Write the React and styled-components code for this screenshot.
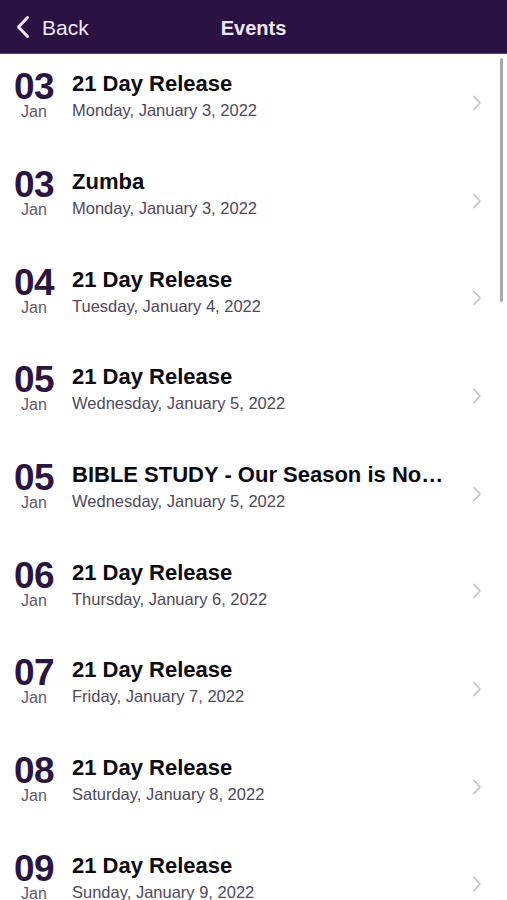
import React from "react";
import styled, { createGlobalStyle } from "styled-components";

const events = [
  { day: "03", title: "21 Day Release", date: "Monday, January 3, 2022" },
  { day: "03", title: "Zumba", date: "Monday, January 3, 2022" },
  { day: "04", title: "21 Day Release", date: "Tuesday, January 4, 2022" },
  { day: "05", title: "21 Day Release", date: "Wednesday, January 5, 2022" },
  { day: "05", title: "BIBLE STUDY - Our Season is Now - Week 1", date: "Wednesday, January 5, 2022" },
  { day: "06", title: "21 Day Release", date: "Thursday, January 6, 2022" },
  { day: "07", title: "21 Day Release", date: "Friday, January 7, 2022" },
  { day: "08", title: "21 Day Release", date: "Saturday, January 8, 2022" },
  { day: "09", title: "21 Day Release", date: "Sunday, January 9, 2022" },
];

const App = () => {
  return (
    <>
      <GlobalStyle />
      <Screen>
        <Header>
          <BackButton>
            <svg width="14" height="24" viewBox="0 0 14 24">
              <polyline
                points="11.5,2.5 2.5,12 11.5,21.5"
                fill="none"
                stroke="currentColor"
                strokeWidth="3"
                strokeLinecap="round"
                strokeLinejoin="round"
              />
            </svg>
            Back
          </BackButton>
          <Title>Events</Title>
        </Header>
        <List>
          {events.map((ev, i) => (
            <Row key={i}>
              <Main>
                <DateCol>
                  <Day>{ev.day}</Day>
                  <Month>Jan</Month>
                </DateCol>
                <Details>
                  <EventTitle>{ev.title}</EventTitle>
                  <EventDate>{ev.date}</EventDate>
                </Details>
              </Main>
              <Chevron width="10" height="16" viewBox="0 0 10 16">
                <polyline
                  points="2,1.5 8,8 2,14.5"
                  fill="none"
                  stroke="#c3c2c7"
                  strokeWidth="1.8"
                  strokeLinecap="round"
                  strokeLinejoin="round"
                />
              </Chevron>
            </Row>
          ))}
          <ScrollThumb />
        </List>
      </Screen>
    </>
  );
};

export default App;

const GlobalStyle = createGlobalStyle`
  html, body {
    margin: 0;
    padding: 0;
    background: #ffffff;
  }
  body {
    font-family: "Liberation Sans", Arial, sans-serif;
  }
`;

const Screen = styled.div`
  width: 507px;
  height: 900px;
  overflow: hidden;
  background: #ffffff;
`;

const Header = styled.header`
  position: relative;
  height: 54px;
  padding-top: 3px;
  background: #2a1243;
  border-bottom: 1px solid #5b4a6e;
  box-sizing: border-box;
  display: flex;
  align-items: center;
  justify-content: center;
`;

const BackButton = styled.div`
  position: absolute;
  left: 16px;
  top: 3px;
  bottom: 0;
  display: flex;
  align-items: center;
  gap: 12px;
  color: #efe8f4;
  font-size: 21px;
  & svg {
    margin-top: -2px;
  }
`;

const Title = styled.h1`
  margin: 0;
  color: #efe8f4;
  font-size: 20px;
  font-weight: 700;
`;

const List = styled.div`
  position: relative;
`;

const Row = styled.div`
  height: 97.7px;
  display: flex;
  align-items: center;
  padding: 0 25px 0 9px;
  box-sizing: border-box;
`;

const Main = styled.div`
  flex: 1;
  min-width: 0;
  display: flex;
  align-items: flex-start;
  gap: 13px;
  padding-bottom: 13px;
`;

const DateCol = styled.div`
  width: 50px;
  flex-shrink: 0;
  margin-top: 1px;
  display: flex;
  flex-direction: column;
  align-items: center;
`;

const Day = styled.div`
  color: #2a1545;
  font-size: 37px;
  font-weight: 700;
  line-height: 30px;
  letter-spacing: -0.5px;
`;

const Month = styled.div`
  color: #5e5869;
  font-size: 16px;
  line-height: 17px;
  margin-top: 1px;
`;

const Details = styled.div`
  flex: 1;
  min-width: 0;
  padding-right: 24px;
  padding-top: 1px;
`;

const EventTitle = styled.div`
  color: #0c0a10;
  font-size: 22px;
  font-weight: 700;
  line-height: 24px;
  white-space: nowrap;
  overflow: hidden;
  text-overflow: ellipsis;
`;

const EventDate = styled.div`
  color: #4e4760;
  font-size: 16.5px;
  line-height: 22px;
  margin-top: 3px;
`;

const Chevron = styled.svg`
  flex-shrink: 0;
`;

const ScrollThumb = styled.div`
  position: absolute;
  right: 4px;
  top: 4px;
  width: 3.5px;
  height: 244px;
  border-radius: 2px;
  background: #a8a8a8;
`;
